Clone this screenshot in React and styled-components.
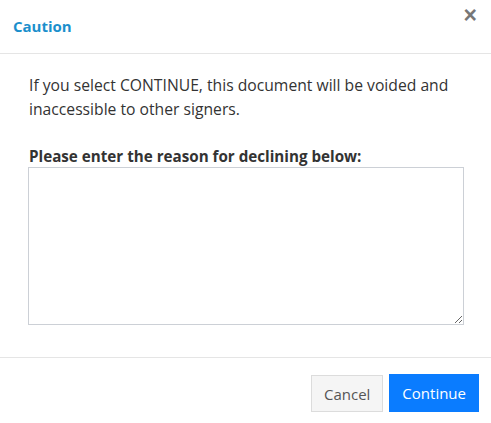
import React from "react";
import styled, { createGlobalStyle } from "styled-components";

const GlobalStyle = createGlobalStyle`
    html, body {
        margin: 0;
        padding: 0;
        background: #fff;
    }
    body {
        font-family: "Open Sans", "Noto Sans", "Liberation Sans", sans-serif;
        color: #333;
    }
`;

const Modal = styled.div`
    width: 491px;
    height: 423px;
    display: flex;
    flex-direction: column;
    background: #fff;
    position: relative;
`;

const Header = styled.div`
    height: 54px;
    box-sizing: border-box;
    border-bottom: 1px solid #e5e5e5;
    display: flex;
    align-items: center;
    padding: 0 13px 1px;
`;

const Title = styled.h4`
    margin: 0;
    font-size: 15px;
    font-weight: 700;
    color: #1b8fcc;
`;

const CloseButton = styled.button`
    position: absolute;
    top: 4px;
    right: 14px;
    border: none;
    background: none;
    padding: 0;
    font-size: 23px;
    font-weight: 700;
    line-height: 22px;
    color: #777;
    cursor: pointer;
    font-family: "Liberation Sans", sans-serif;
`;

const Body = styled.div`
    padding: 19px 27px 32px 29px;
    display: flex;
    flex-direction: column;
    border-bottom: 1px solid #e5e5e5;
`;

const Message = styled.p`
    margin: 0 0 25px 0;
    font-size: 15.7px;
    line-height: 24px;
`;

const Label = styled.label`
    font-size: 15.2px;
    font-weight: 700;
    line-height: 21px;
    display: block;
    margin-bottom: 0;
`;

const Reason = styled.textarea`
    box-sizing: border-box;
    width: 436px;
    height: 158px;
    margin-left: -1px;
    border: 1px solid #ccd0d6;
    border-radius: 0;
    resize: both;
    font-family: inherit;
    font-size: 14px;
    outline: none;
`;

const Footer = styled.div`
    display: flex;
    justify-content: flex-end;
    align-items: center;
    gap: 6px;
    padding: 16px 12px 0 0;
`;

const Button = styled.button`
    box-sizing: border-box;
    height: ${(p) => (p.$primary ? "38px" : "37px")};
    padding: 0 12px;
    font-family: inherit;
    font-size: 15px;
    border-radius: 0;
    cursor: pointer;
    border: 1px solid ${(p) => (p.$primary ? "#0a7cff" : "#dcdcdc")};
    background: ${(p) => (p.$primary ? "#0a7cff" : "#f5f5f5")};
    color: ${(p) => (p.$primary ? "#fff" : "#555")};
    margin-top: ${(p) => (p.$primary ? "0" : "1px")};
`;

export default function App() {
    return (
        <Modal>
            <GlobalStyle />
            <Header>
                <Title>Caution</Title>
            </Header>
            <CloseButton aria-label="Close">×</CloseButton>
            <Body>
                <Message>
                    If you select CONTINUE, this document will be voided and
                    inaccessible to other signers.
                </Message>
                <Label htmlFor="reason">Please enter the reason for declining below:</Label>
                <Reason id="reason" />
            </Body>
            <Footer>
                <Button>Cancel</Button>
                <Button $primary>Continue</Button>
            </Footer>
        </Modal>
    );
}
